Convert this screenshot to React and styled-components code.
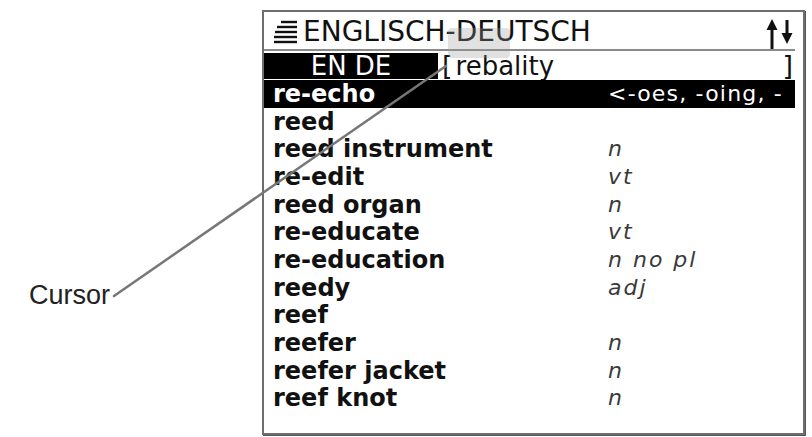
import React from "react";
import styled, { createGlobalStyle } from "styled-components";

const GlobalStyle = createGlobalStyle`
  html, body { margin: 0; padding: 0; background: #fff; }
  body { font-family: "DejaVu Sans", sans-serif; }
`;

const Page = styled.div`
  position: relative;
  width: 812px;
  height: 437px;
  display: flex;
  align-items: flex-start;
  padding-top: 10px;
  box-sizing: border-box;
  background: #fff;
  overflow: hidden;
`;

const LabelColumn = styled.div`
  width: 262px;
  flex: none;
  display: flex;
  justify-content: flex-end;
  padding-top: 270px;
  padding-right: 152px;
  box-sizing: border-box;
`;

const CalloutLabel = styled.span`
  font-family: "Liberation Sans", Arial, sans-serif;
  font-size: 27px;
  color: #222;
  line-height: 30px;
`;

const Screen = styled.div`
  width: 543px;
  height: 425px;
  flex: none;
  box-sizing: border-box;
  border: 2px solid #6e6e6e;
  box-shadow: 1px 1px 0 #555;
  background: #fff;
  display: flex;
  flex-direction: column;
  padding-right: 8px;
`;

const TitleBar = styled.div`
  height: 37px;
  display: flex;
  align-items: center;
  gap: 5px;
  padding-left: 8px;
  border-bottom: 2px solid #8a8a8a;
`;

const TitleText = styled.span`
  font-family: "DejaVu Sans", sans-serif;
  font-size: 28px;
  font-weight: 400;
  color: #111;
  line-height: 1;
  padding-top: 2px;
`;

const SortIcon = styled.svg`
  margin-left: auto;
  align-self: flex-end;
`;

const SearchRow = styled.div`
  margin-top: 2px;
  height: 26px;
  display: flex;
  align-items: stretch;
`;

const LangBadge = styled.div`
  width: 174px;
  flex: none;
  background: #000;
  color: #fff;
  font-family: "DejaVu Sans", sans-serif;
  font-size: 26px;
  line-height: 26px;
  display: flex;
  justify-content: center;
  align-items: center;
`;

const InputField = styled.div`
  flex: 1;
  display: flex;
  align-items: center;
  padding-left: 4px;
  padding-right: 2px;
  font-family: "DejaVu Sans", sans-serif;
  font-size: 26px;
  color: #111;
  line-height: 26px;
`;

const Bracket = styled.span`
  font-size: 27px;
  color: #111;
  margin-left: ${(p) => (p.$end ? "auto" : "0")};
`;

const InputText = styled.span`
  margin-left: 3px;
`;

const EntryList = styled.div`
  margin-top: 1px;
  display: flex;
  flex-direction: column;
`;

const Entry = styled.div`
  height: 27.7px;
  display: grid;
  grid-template-columns: 335px 1fr;
  align-items: center;
  padding-left: 9px;
  padding-right: 4px;
  background: ${(p) => (p.$active ? "#000" : "transparent")};
  color: ${(p) => (p.$active ? "#fff" : "#111")};
  white-space: nowrap;
`;

const Term = styled.span`
  font-family: "DejaVu Sans", sans-serif;
  font-weight: 700;
  font-size: 24px;
  line-height: 1;
`;

const WordClass = styled.span`
  font-family: "DejaVu Sans", sans-serif;
  font-style: ${(p) => (p.$plain ? "normal" : "oblique")};
  font-size: 22px;
  letter-spacing: ${(p) => (p.$plain ? "1.2px" : "2px")};
  color: ${(p) => (p.$plain ? "#fff" : "#3a3a3a")};
  line-height: 1.1;
`;

const Leader = styled.svg`
  position: absolute;
  left: 0;
  top: 0;
  pointer-events: none;
`;

const entries = [
  { term: "re-echo", info: "<-oes, -oing, -", active: true },
  { term: "reed", info: "" },
  { term: "reed instrument", info: "n" },
  { term: "re-edit", info: "vt" },
  { term: "reed organ", info: "n" },
  { term: "re-educate", info: "vt" },
  { term: "re-education", info: "n no pl" },
  { term: "reedy", info: "adj" },
  { term: "reef", info: "" },
  { term: "reefer", info: "n" },
  { term: "reefer jacket", info: "n" },
  { term: "reef knot", info: "n" },
];

function MenuGlyph() {
  return (
    <svg width="26" height="26" viewBox="0 0 26 26">
      <g stroke="#111" strokeWidth="2.4" strokeLinecap="butt">
        <line x1="9" y1="4" x2="25" y2="4" />
        <line x1="5" y1="9" x2="25" y2="9" />
        <line x1="3" y1="14" x2="25" y2="14" />
        <line x1="2" y1="19" x2="25" y2="19" />
        <line x1="2" y1="24" x2="25" y2="24" />
      </g>
    </svg>
  );
}

function SortGlyph() {
  return (
    <SortIcon width="30" height="31" viewBox="0 0 30 31">
      <line x1="7" y1="6" x2="7" y2="31" stroke="#111" strokeWidth="3" />
      <polygon points="1.5,12 7,1 12.5,12" fill="#111" />
      <line x1="22" y1="2" x2="22" y2="20" stroke="#111" strokeWidth="3" />
      <polygon points="16.5,15 22,26 27.5,15" fill="#111" />
    </SortIcon>
  );
}

export default function App() {
  return (
    <>
      <GlobalStyle />
      <Page>
        <LabelColumn>
          <CalloutLabel>Cursor</CalloutLabel>
        </LabelColumn>
        <Screen>
          <TitleBar>
            <MenuGlyph />
            <TitleText>ENGLISCH-DEUTSCH</TitleText>
            <SortGlyph />
          </TitleBar>
          <SearchRow>
            <LangBadge>EN DE</LangBadge>
            <InputField>
              <Bracket>[</Bracket>
              <InputText>rebality</InputText>
              <Bracket $end>]</Bracket>
            </InputField>
          </SearchRow>
          <EntryList>
            {entries.map((e) => (
              <Entry key={e.term} $active={e.active}>
                <Term>{e.term}</Term>
                <WordClass $plain={e.active}>{e.info}</WordClass>
              </Entry>
            ))}
          </EntryList>
        </Screen>
        <Leader width="812" height="437" viewBox="0 0 812 437">
          <rect x="448" y="28" width="62" height="30" rx="4" fill="#9a9a9a" opacity="0.3" />
          <line x1="114" y1="296" x2="446" y2="66" stroke="#777" strokeWidth="2.5" strokeLinecap="round" />
        </Leader>
      </Page>
    </>
  );
}
